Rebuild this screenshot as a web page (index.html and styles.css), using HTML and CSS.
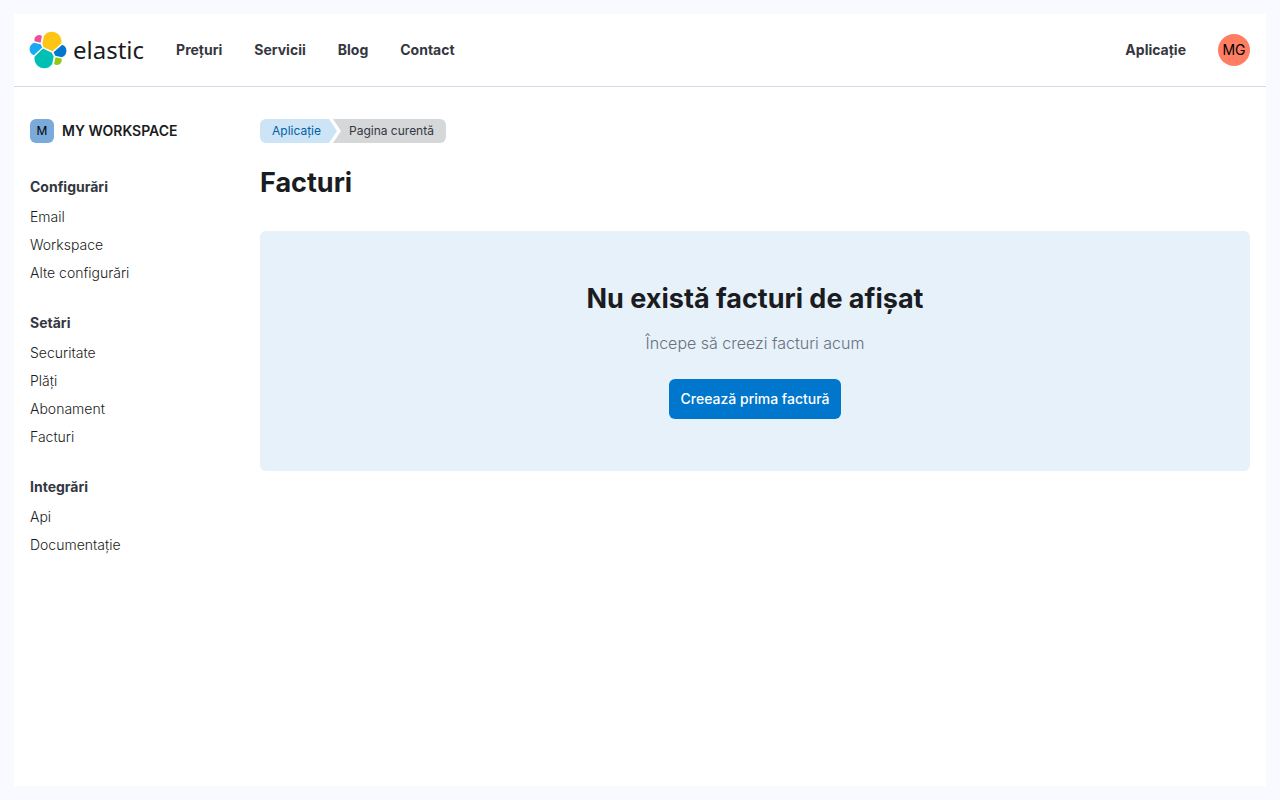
FILE: index.html
```html
<!DOCTYPE html>
<html lang="ro">
<head>
<meta charset="utf-8">
<meta name="viewport" content="width=device-width, initial-scale=1">
<title>Facturi</title>
<link rel="stylesheet" href="styles.css">
</head>
<body>
<div class="page">
  <header class="header">
    <a class="logo" href="#">
      <svg class="logo-mark" viewBox="0 0 32 32" aria-hidden="true">
        <path fill="#fec514" d="M12.58 13.787l7.002 3.211 7.066-6.213a7.849 7.849 0 00.152-1.557c0-4.287-3.464-7.763-7.736-7.763a7.73 7.73 0 00-6.389 3.393l-1.176 6.123 1.081 2.806z"/>
        <path fill="#00bfb3" d="M5.333 21.228A7.964 7.964 0 005.18 22.8c0 4.3 3.486 7.786 7.786 7.786a7.766 7.766 0 006.42-3.4l1.166-6.1-1.556-2.985-7.03-3.212-6.633 6.339z"/>
        <path fill="#f04e98" d="M5.288 9.068l4.8 1.137L11.14 4.73a3.785 3.785 0 00-6.077 3.02c0 .455.076.9.225 1.318z"/>
        <path fill="#1ba9f5" d="M4.872 10.214c-2.145.712-3.603 2.773-3.603 5.035a5.3 5.3 0 003.374 4.94l6.734-6.1-1.236-2.646-5.269-1.229z"/>
        <path fill="#93c90e" d="M20.873 27.186a3.78 3.78 0 002.304.79 3.784 3.784 0 003.576-5.112l-4.796-1.124-1.084 5.446z"/>
        <path fill="#0077cc" d="M21.848 20.563l5.28 1.236c2.145-.71 3.603-2.774 3.603-5.038a5.313 5.313 0 00-3.384-4.943l-6.905 6.063 1.406 2.682z"/>
      </svg>
      <span class="logo-name">elastic</span>
    </a>
    <nav class="nav" aria-label="Principal">
      <a href="#">Prețuri</a>
      <a href="#">Servicii</a>
      <a href="#">Blog</a>
      <a href="#">Contact</a>
    </nav>
    <nav class="nav nav-end" aria-label="Cont">
      <a href="#">Aplicație</a>
      <button class="avatar" type="button">MG</button>
    </nav>
  </header>
  <div class="body">
    <aside class="sidebar">
      <div class="workspace">
        <span class="workspace-badge">M</span>
        <span>MY WORKSPACE</span>
      </div>
      <nav class="side-nav" aria-label="Setări">
        <section>
          <h2 class="side-title">Configurări</h2>
          <ul class="side-list">
            <li><a href="#">Email</a></li>
            <li><a href="#">Workspace</a></li>
            <li><a href="#">Alte configurări</a></li>
          </ul>
        </section>
        <section>
          <h2 class="side-title">Setări</h2>
          <ul class="side-list">
            <li><a href="#">Securitate</a></li>
            <li><a href="#">Plăți</a></li>
            <li><a href="#">Abonament</a></li>
            <li><a href="#">Facturi</a></li>
          </ul>
        </section>
        <section>
          <h2 class="side-title">Integrări</h2>
          <ul class="side-list">
            <li><a href="#">Api</a></li>
            <li><a href="#">Documentație</a></li>
          </ul>
        </section>
      </nav>
    </aside>
    <main class="main">
      <nav class="crumbs" aria-label="Breadcrumb">
        <a class="crumb crumb-link" href="#">Aplicație</a>
        <span class="crumb crumb-current" aria-current="page">Pagina curentă</span>
      </nav>
      <h1 class="title">Facturi</h1>
      <section class="empty">
        <h2 class="title">Nu există facturi de afișat</h2>
        <p class="empty-text">Începe să creezi facturi acum</p>
        <button class="button" type="button">Creează prima factură</button>
      </section>
    </main>
  </div>
</div>
</body>
</html>
```
FILE: styles.css
```css
* {
  box-sizing: border-box;
}

body {
  margin: 0;
  padding: 14px;
  min-height: 100vh;
  display: flex;
  background: #f8faff;
  color: #1a1c21;
  font-family: Inter, sans-serif;
  font-size: 14px;
  line-height: 20px;
}

h1,
h2,
p,
ul {
  margin: 0;
  padding: 0;
}

a {
  color: inherit;
  text-decoration: none;
}

button {
  border: 0;
  font: inherit;
  cursor: pointer;
}

.page {
  flex: 1;
  background: #fff;
}

.header {
  display: flex;
  align-items: center;
  gap: 32px;
  padding: 16px 16px 16px 14px;
  border-bottom: 1px solid #d3dae6;
}

.logo {
  display: flex;
  align-items: center;
  gap: 5px;
}

.logo-mark {
  width: 40px;
  height: 40px;
}

.logo-name {
  font-family: "Noto Sans", sans-serif;
  font-size: 24px;
  line-height: 40px;
}

.nav {
  display: flex;
  align-items: center;
  gap: 32px;
  color: #343741;
  font-weight: 700;
}

.nav-end {
  margin-left: auto;
}

.avatar {
  width: 32px;
  height: 32px;
  padding: 0;
  border-radius: 50%;
  background: #ff7e62;
  color: #000;
  font-weight: 400;
}

.body {
  display: flex;
  gap: 32px;
  padding: 32px 16px;
}

.sidebar {
  flex: 0 0 198px;
}

.workspace {
  display: flex;
  align-items: center;
  gap: 8px;
  font-weight: 600;
}

.workspace-badge {
  width: 24px;
  height: 24px;
  border-radius: 6px;
  background: #79aad9;
  color: #000;
  font-size: 12px;
  font-weight: 400;
  line-height: 24px;
  text-align: center;
}

.side-nav {
  display: grid;
  gap: 26px;
  margin-top: 34px;
}

.side-title {
  color: #343741;
  font-size: 14px;
  font-weight: 700;
  line-height: 20px;
}

.side-list {
  margin-top: 6px;
  list-style: none;
  font-weight: 300;
  line-height: 28px;
}

.main {
  flex: 1;
  min-width: 0;
}

.crumbs {
  display: flex;
  font-size: 12px;
  line-height: 24px;
}

.crumb-link {
  padding: 0 16px 0 12px;
  border-radius: 6px 0 0 6px;
  background: #cce4f5;
  color: #0061a6;
  clip-path: polygon(0 0, calc(100% - 8px) 0, 100% 50%, calc(100% - 8px) 100%, 0 100%);
}

.crumb-current {
  margin-left: -4px;
  padding: 0 12px 0 16px;
  border-radius: 0 6px 6px 0;
  background: #d6d7d9;
  color: #343741;
  clip-path: polygon(0 0, 100% 0, 100% 100%, 0 100%, 8px 50%);
}

.title {
  font-size: 27px;
  font-weight: 700;
  line-height: 32px;
}

h1.title {
  margin-top: 24px;
}

.empty {
  display: flex;
  flex-direction: column;
  align-items: center;
  margin-top: 32px;
  padding: 52px 24px;
  border-radius: 6px;
  background: #e6f1fa;
  text-align: center;
}

.empty-text {
  margin-top: 16px;
  color: #69707d;
  font-size: 16px;
  font-weight: 300;
  line-height: 24px;
}

.button {
  margin-top: 24px;
  padding: 0 12px;
  border-radius: 6px;
  background: #0077cc;
  color: #fff;
  font-weight: 500;
  line-height: 40px;
}
```
